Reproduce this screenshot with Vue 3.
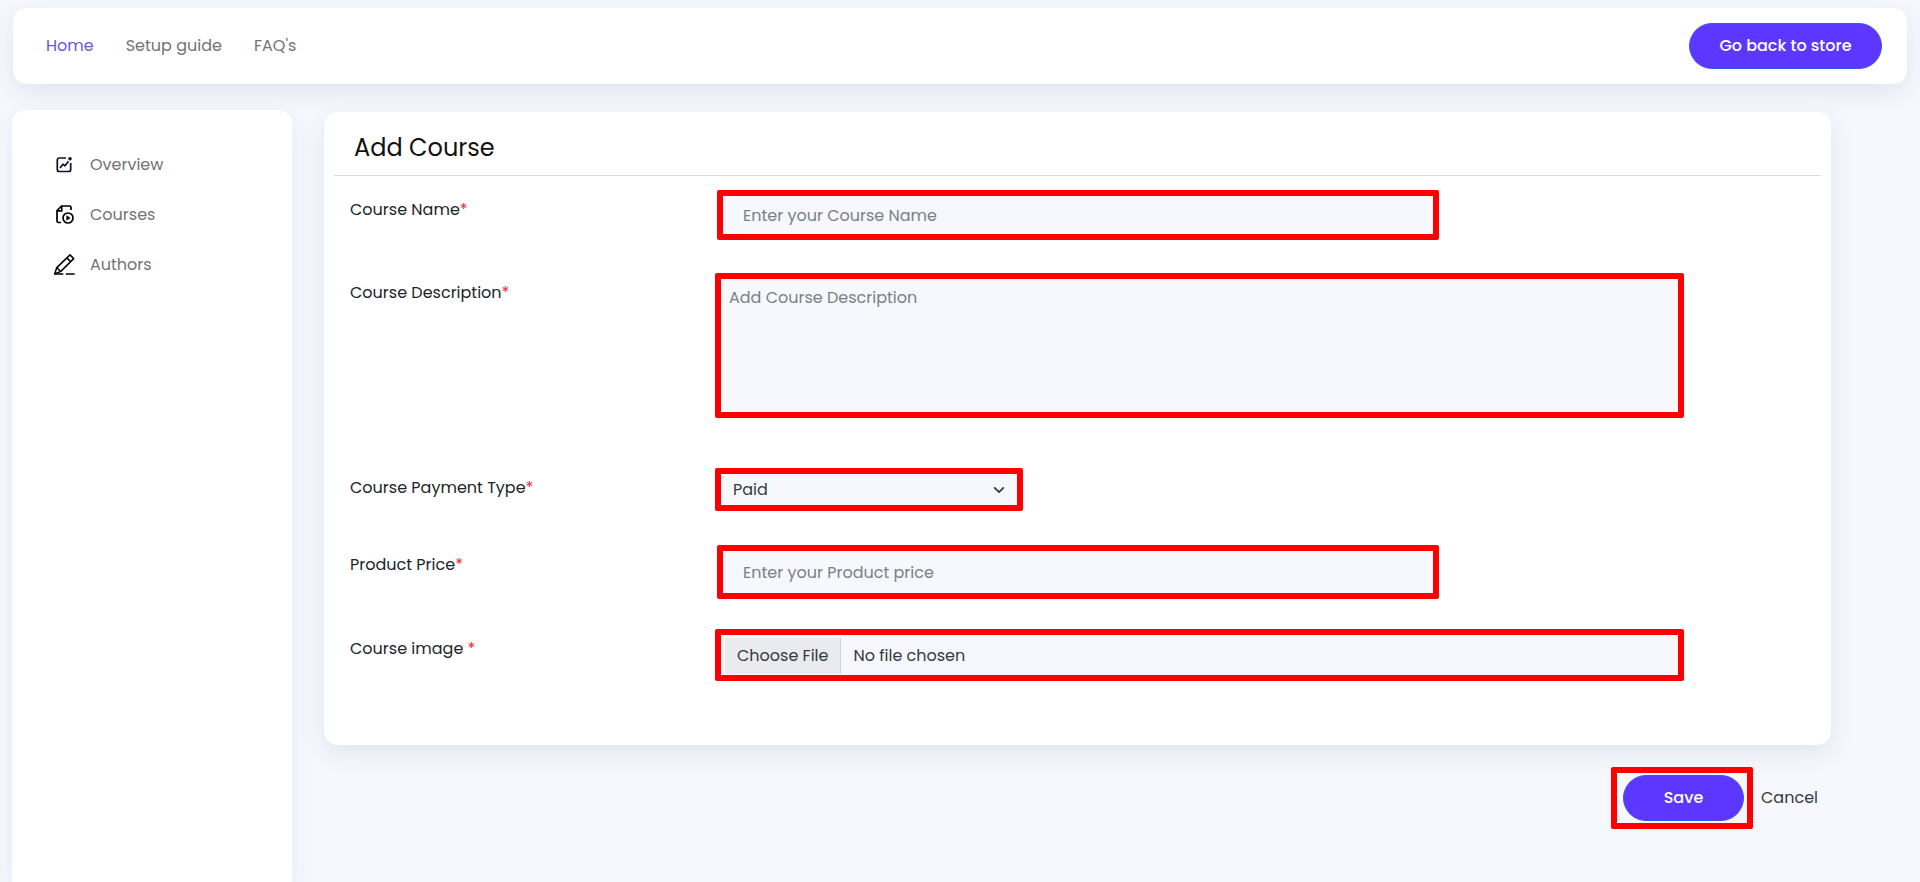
<script setup>
import { ref } from 'vue'

defineOptions({ name: 'AddCourse' })

const courseName = ref('')
const description = ref('')
const paymentType = ref('paid')
const price = ref('')

const links = [
  { label: 'Home', active: true },
  { label: 'Setup guide', active: false },
  { label: "FAQ's", active: false },
]
</script>

<template>
  <div class="page">
    <header class="topbar">
      <nav class="topnav">
        <a
          v-for="link in links"
          :key="link.label"
          href="#"
          class="nav-link"
          :class="{ active: link.active }"
          >{{ link.label }}</a
        >
      </nav>
      <button type="button" class="btn-main btn-store">Go back to store</button>
    </header>

    <div class="layout">
      <aside class="sidebar">
        <a href="#" class="side-link">
          <svg class="side-icon" viewBox="0 0 22 22" fill="none" stroke="#0f1229" stroke-width="1.7">
            <path d="M13 4H6.300A2 2 0 0 0 4.300 6v9.500a2 2 0 0 0 2 2h9.400a2 2 0 0 0 2-2V9" />
            <path d="M7 14l3-3.800 2 1.600 3.500-4.600" stroke-linejoin="round" />
            <circle cx="17" cy="4.700" r="1.800" fill="#0f1229" stroke="none" />
          </svg>
          Overview
        </a>
        <a href="#" class="side-link">
          <svg class="side-icon" viewBox="0 0 22 22" fill="none" stroke="#000" stroke-width="1.7">
            <path d="M8 18.500H5.500A1.500 1.500 0 0 1 4 17V6.500L8.500 2H16.500A1.500 1.500 0 0 1 18 3.500V6" />
            <path d="M4 6.800H8.700V2" />
            <circle cx="15" cy="14" r="5" />
            <path d="M13.400 11.300v5.400l4.200-2.700z" fill="#000" stroke="none" />
          </svg>
          Courses
        </a>
        <a href="#" class="side-link">
          <svg class="side-icon" viewBox="0 0 22 22" fill="none" stroke="#000" stroke-width="1.5">
            <path d="M1.800 19.600l2-6L17 0.900l3.700 3.700L7.500 17.600z" stroke-linejoin="round" />
            <path d="M13.900 3.900l3.700 3.700M3.800 13.600l3.700 4" />
            <path d="M1 20h9.300M12.800 20H21.600" />
          </svg>
          Authors
        </a>
      </aside>

      <main class="content">
        <form @submit.prevent>
          <section class="card">
            <h1 class="card-title">Add Course</h1>

            <div class="rows">
              <div class="row">
                <label for="course-name">Course Name<span class="required">*</span></label>
                <input
                  id="course-name"
                  v-model="courseName"
                  type="text"
                  class="field field-text"
                  placeholder="Enter your Course Name"
                />
              </div>

              <div class="row">
                <label for="description">Course Description<span class="required">*</span></label>
                <textarea
                  id="description"
                  v-model="description"
                  class="field field-area"
                  placeholder="Add Course Description"
                ></textarea>
              </div>

              <div class="row">
                <label for="payment-type">Course Payment Type<span class="required">*</span></label>
                <div class="select-wrap">
                  <select id="payment-type" v-model="paymentType" class="field field-select">
                    <option value="paid">Paid</option>
                    <option value="free">Free</option>
                  </select>
                  <svg class="chevron" viewBox="0 0 16 16" fill="none" stroke="#343a40" stroke-width="2">
                    <path d="M3 5.500l5 5 5-5" stroke-linecap="round" stroke-linejoin="round" />
                  </svg>
                </div>
              </div>

              <div class="row">
                <label for="price">Product Price<span class="required">*</span></label>
                <input
                  id="price"
                  v-model="price"
                  type="text"
                  class="field field-text field-price"
                  placeholder="Enter your Product price"
                />
              </div>

              <div class="row">
                <label for="course-image">Course image <span class="required">*</span></label>
                <input id="course-image" type="file" class="field field-file" />
              </div>
            </div>
          </section>

          <div class="actions">
            <div class="save-frame">
              <button type="submit" class="btn-main btn-save">Save</button>
            </div>
            <a href="#" class="cancel">Cancel</a>
          </div>
        </form>
      </main>
    </div>
  </div>
</template>

<style>
body {
  margin: 0;
  background: #f6f8fe;
}
</style>

<style scoped>
* {
  box-sizing: border-box;
}

.page {
  display: flex;
  flex-direction: column;
  min-height: 100vh;
  padding: 8px 12px 0;
  font-family: Poppins, Inter, 'Open Sans', sans-serif;
  font-size: 16px;
  line-height: 24px;
  color: #212529;
}

a {
  text-decoration: none;
}

.topbar {
  display: flex;
  align-items: center;
  justify-content: space-between;
  height: 76px;
  margin: 0 1px;
  padding: 0 25px 0 33px;
  background: #fff;
  border-radius: 14px;
  box-shadow: 0 8px 24px rgba(60, 60, 100, 0.1);
}

.topnav {
  display: flex;
  gap: 32px;
}

.nav-link {
  color: #737373;
}

.nav-link.active {
  color: #6f55de;
}

.btn-main {
  height: 46px;
  border: 1px solid #3a55f0;
  border-radius: 23px;
  background: #5d36ff;
  color: #fff;
  font: inherit;
  font-weight: 500;
  cursor: pointer;
}

.btn-store {
  width: 193px;
}

.btn-save {
  width: 121px;
}

.layout {
  display: flex;
  flex: 1;
  gap: 32px;
  margin-top: 26px;
}

.sidebar {
  display: flex;
  flex-direction: column;
  flex: none;
  gap: 26px;
  width: 280px;
  padding: 43px 41px;
  background: #fff;
  border-radius: 14px 14px 0 0;
  box-shadow: 0 8px 24px rgba(60, 60, 100, 0.08);
}

.side-link {
  display: flex;
  align-items: center;
  gap: 15px;
  color: #737373;
}

.side-icon {
  width: 22px;
  height: 22px;
}

.content {
  flex: 1;
  min-width: 0;
  padding: 2px 77px 40px 0;
}

.card {
  padding: 0 10px 64px;
  background: #fff;
  border-radius: 14px;
  box-shadow: 0 8px 24px rgba(60, 60, 100, 0.1);
}

.card-title {
  margin: 0;
  padding: 21px 20px 13px;
  border-bottom: 1px solid #dcdcdc;
  font-size: 24px;
  font-weight: 400;
  line-height: 29px;
  color: #111;
}

.rows {
  display: grid;
  grid-template-rows:
    minmax(53px, auto) minmax(165px, auto) minmax(47px, auto)
    auto auto;
  gap: 30px;
  padding: 14px 16px 0;
}

.row {
  display: grid;
  grid-template-columns: 365px 1fr;
  align-items: start;
}

.row label {
  padding-top: 8px;
}

.required {
  color: #f5222d;
}

.field {
  display: block;
  width: 100%;
  border: 6px solid #f00;
  border-radius: 2px;
  outline: none;
  background: #f6f8fe;
  color: #343a40;
  font: inherit;
}

.field::placeholder {
  color: #7a8087;
  opacity: 1;
}

.field-text {
  max-width: 722px;
  height: 50px;
  margin-left: 2px;
  padding: 0 20px;
}

.field-price {
  height: 54px;
}

.field-area {
  max-width: 969px;
  height: 145px;
  padding: 7px 8px;
  resize: none;
}

.select-wrap {
  position: relative;
  width: 308px;
}

.field-select {
  height: 43px;
  padding: 0 12px;
  appearance: none;
}

.chevron {
  position: absolute;
  top: 15px;
  right: 17px;
  width: 14px;
  height: 14px;
  pointer-events: none;
}

.field-file {
  max-width: 969px;
  height: 52px;
  padding: 3px 4px;
}

.field-file::file-selector-button {
  height: 36px;
  margin-right: 12px;
  padding: 0 12px;
  border: 0;
  border-right: 1px solid #d3d5da;
  background: #e9ebef;
  color: #343a40;
  font: inherit;
}

.actions {
  display: flex;
  align-items: center;
  justify-content: flex-end;
  gap: 8px;
  margin-top: 22px;
  padding-right: 13px;
}

.save-frame {
  padding: 2px 3px 2px 6px;
  border: 6px solid #f00;
  border-radius: 2px;
}

.cancel {
  color: #343a40;
}
</style>
